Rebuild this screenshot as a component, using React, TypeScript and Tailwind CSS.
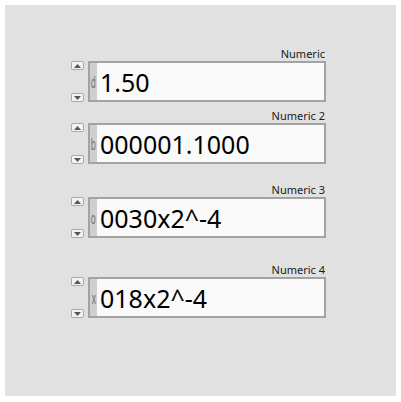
import React from "react";

const font = { fontFamily: '"Noto Sans", "Open Sans", "Liberation Sans", sans-serif' };

function Spin() {
  return (
    <div className="flex h-[41px] w-[13px] flex-col justify-between">
      <div className="flex h-[9px] w-[13px] items-center justify-center rounded-[2px] border border-[#a9a9a9] bg-[#f4f4f4]">
        <svg width="7" height="4" viewBox="0 0 7 4"><polygon points="3.5,0 7,4 0,4" fill="#555" /></svg>
      </div>
      <div className="flex h-[9px] w-[13px] items-center justify-center rounded-[2px] border border-[#a9a9a9] bg-[#f4f4f4]">
        <svg width="7" height="4" viewBox="0 0 7 4"><polygon points="0,0 7,0 3.5,4" fill="#555" /></svg>
      </div>
    </div>
  );
}

function Field({ label, value, radix, mt }: { label: string; value: string; radix: string; mt: string }) {
  return (
    <div className={`flex flex-col ${mt}`}>
      <div className="h-[15px] w-[255px] pr-[1px] text-right text-[11px] leading-[15px] text-[#1a1a1a]" style={font}>
        {label}
      </div>
      <div className="flex items-start gap-[4px]">
        <Spin />
        <div className="flex h-[41px] w-[238px] border-2 border-[#a3a3a3] bg-[#fafafa]">
          <div className="flex h-full w-[7px] items-center justify-center bg-[#cfcfcf]">
            <span className="scale-x-75 scale-y-150 text-[11px] leading-none text-[#6f6f6f]" style={font}>{radix}</span>
          </div>
          <div className="flex flex-1 items-center pl-[3px] pt-[1px] text-[25px] leading-none text-black" style={font}>
            {value}
          </div>
        </div>
      </div>
    </div>
  );
}

export default function App() {
  return (
    <div className="h-[402px] w-[401px] bg-white pl-[5px] pt-[5px]">
      <div className="h-[391px] w-[391px] bg-[#e1e1e1] pl-[66px] pt-[41px]">
        <Field label="Numeric" value="1.50" radix="d" mt="mt-0" />
        <Field label="Numeric 2" value="000001.1000" radix="b" mt="mt-[6px]" />
        <Field label="Numeric 3" value="0030x2^-4" radix="o" mt="mt-[18px]" />
        <Field label="Numeric 4" value="018x2^-4" radix="x" mt="mt-[24px]" />
      </div>
    </div>
  );
}
